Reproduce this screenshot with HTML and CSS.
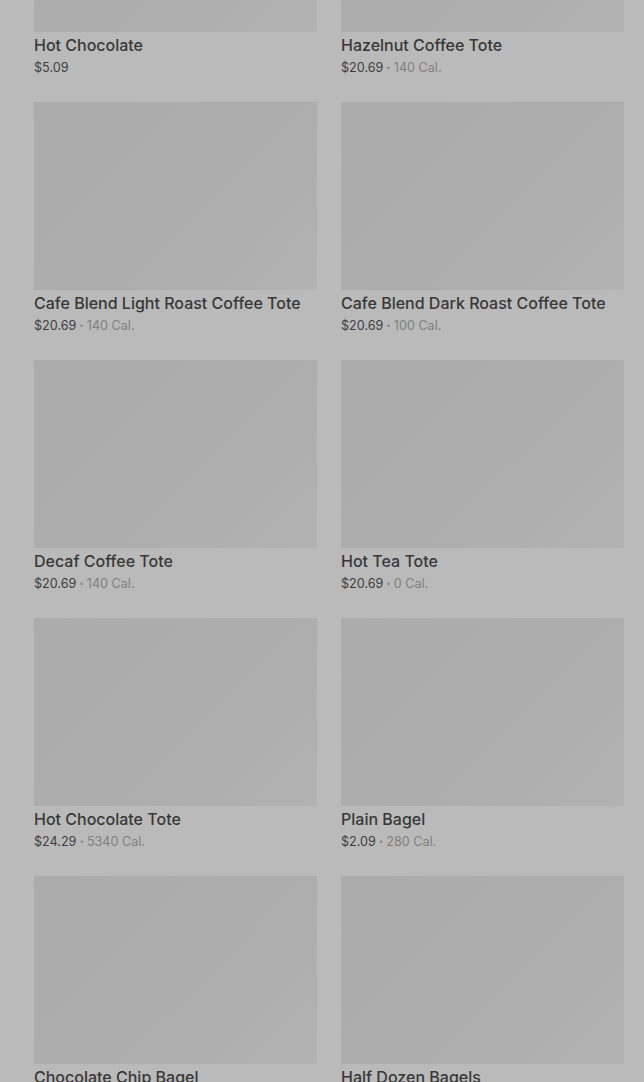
FILE: index.html
```html
<!DOCTYPE html>
<html lang="en">
<head>
<meta charset="utf-8">
<link rel="stylesheet" href="styles.css">
<title>Menu</title>
</head>
<body>
<main class="grid">
  <article class="item"><div class="thumb"></div><h3 class="name">Hot Chocolate</h3><p class="meta"><span class="price">$5.09</span></p></article>
  <article class="item"><div class="thumb"></div><h3 class="name">Hazelnut Coffee Tote</h3><p class="meta"><span class="price">$20.69</span><span class="dot">•</span><span class="cal">140 Cal.</span></p></article>
  <article class="item"><div class="thumb"></div><h3 class="name">Cafe Blend Light Roast Coffee Tote</h3><p class="meta"><span class="price">$20.69</span><span class="dot">•</span><span class="cal">140 Cal.</span></p></article>
  <article class="item"><div class="thumb"></div><h3 class="name">Cafe Blend Dark Roast Coffee Tote</h3><p class="meta"><span class="price">$20.69</span><span class="dot">•</span><span class="cal">100 Cal.</span></p></article>
  <article class="item"><div class="thumb"></div><h3 class="name">Decaf Coffee Tote</h3><p class="meta"><span class="price">$20.69</span><span class="dot">•</span><span class="cal">140 Cal.</span></p></article>
  <article class="item"><div class="thumb"></div><h3 class="name">Hot Tea Tote</h3><p class="meta"><span class="price">$20.69</span><span class="dot">•</span><span class="cal">0 Cal.</span></p></article>
  <article class="item"><div class="thumb"></div><h3 class="name">Hot Chocolate Tote</h3><p class="meta"><span class="price">$24.29</span><span class="dot">•</span><span class="cal">5340 Cal.</span></p></article>
  <article class="item"><div class="thumb"></div><h3 class="name">Plain Bagel</h3><p class="meta"><span class="price">$2.09</span><span class="dot">•</span><span class="cal">280 Cal.</span></p></article>
  <article class="item"><div class="thumb"></div><h3 class="name">Chocolate Chip Bagel</h3><p class="meta"><span class="price">$2.09</span><span class="dot">•</span><span class="cal">280 Cal.</span></p></article>
  <article class="item"><div class="thumb"></div><h3 class="name">Half Dozen Bagels</h3><p class="meta"><span class="price">$12.49</span><span class="dot">•</span><span class="cal">1680 Cal.</span></p></article>
</main>
</body>
</html>
```
FILE: styles.css
```css
html, body {
  margin: 0;
  padding: 0;
  background: #bababa;
  height: 100%;
  overflow: hidden;
}
body {
  font-family: Inter, "Noto Sans", sans-serif;
  color: #3a3a3a;
}
.grid {
  display: grid;
  grid-template-columns: 283px 283px;
  column-gap: 24px;
  row-gap: 24px;
  padding: 0 20px 0 34px;
  margin-top: -156px;
}
.item {
  margin: 0;
}
.thumb {
  height: 188px;
  background: linear-gradient(135deg, #acacac 0%, #adadad 55%, #b2b2b2 100%);
}
.name {
  margin: 0;
  padding-top: 2px;
  font-size: 16px;
  line-height: 22px;
  font-weight: 500;
  color: #383838;
  white-space: nowrap;
}
.meta {
  margin: 0;
  padding-top: 2px;
  height: 20px;
  font-size: 12.6px;
  line-height: 20px;
  color: #3e3e3e;
}
.dot {
  margin: 0 3px;
  font-size: 8px;
  line-height: 0;
  color: #8a8a8a;
  vertical-align: 2px;
}
.cal {
  color: #808080;
}
```
